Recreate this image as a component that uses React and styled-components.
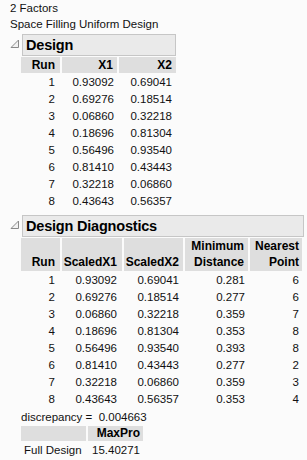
import React from 'react';
import styled, { createGlobalStyle } from 'styled-components';

const GlobalStyle = createGlobalStyle`
  body {
    margin: 0;
    background: #fbfbfb;
    font-family: "Liberation Sans", Arial, sans-serif;
    font-size: 11.5px;
    color: #111;
  }
`;

const designRows = [
  [1, '0.93092', '0.69041'],
  [2, '0.69276', '0.18514'],
  [3, '0.06860', '0.32218'],
  [4, '0.18696', '0.81304'],
  [5, '0.56496', '0.93540'],
  [6, '0.81410', '0.43443'],
  [7, '0.32218', '0.06860'],
  [8, '0.43643', '0.56357'],
];

const diagRows = [
  [1, '0.93092', '0.69041', '0.281', 6],
  [2, '0.69276', '0.18514', '0.277', 6],
  [3, '0.06860', '0.32218', '0.359', 7],
  [4, '0.18696', '0.81304', '0.353', 8],
  [5, '0.56496', '0.93540', '0.393', 8],
  [6, '0.81410', '0.43443', '0.277', 2],
  [7, '0.32218', '0.06860', '0.359', 3],
  [8, '0.43643', '0.56357', '0.353', 4],
];

const Disclosure = () => (
  <TriangleBox>
    <svg width="10" height="10" viewBox="0 0 10 10">
      <polygon points="8.5,1 8.5,8.5 1,8.5" fill="#f2f2f2" stroke="#8a8a8a" strokeWidth="1" />
    </svg>
  </TriangleBox>
);

const App = () => {
  return (
    <Page>
      <GlobalStyle />
      <Line>2 Factors</Line>
      <Line>Space Filling Uniform Design</Line>

      <Outline>
        <Disclosure />
        <OutlineTitle>Design</OutlineTitle>
        <Body>
          <Grid cols="39px 55px 57px">
            <HeadCell pad={5}>Run</HeadCell>
            <HeadCell>X1</HeadCell>
            <HeadCell>X2</HeadCell>
            {designRows.map((r) => (
              <React.Fragment key={r[0]}>
                <Cell pad={5}>{r[0]}</Cell>
                <Cell pad={3}>{r[1]}</Cell>
                <Cell>{r[2]}</Cell>
              </React.Fragment>
            ))}
          </Grid>
        </Body>
      </Outline>

      <Outline>
        <Disclosure />
        <OutlineTitle wide>Design Diagnostics</OutlineTitle>
        <Body>
          <Grid cols="39px 60px 59px 63px 52px">
            <HeadCell pad={5} tall>Run</HeadCell>
            <HeadCell pad={5} tall>ScaledX1</HeadCell>
            <HeadCell tall>ScaledX2</HeadCell>
            <HeadCell tall>Minimum<br />Distance</HeadCell>
            <HeadCell pad={3} tall>Nearest<br />Point</HeadCell>
            {diagRows.map((r) => (
              <React.Fragment key={r[0]}>
                <Cell pad={5}>{r[0]}</Cell>
                <Cell pad={5}>{r[1]}</Cell>
                <Cell>{r[2]}</Cell>
                <Cell pad={3}>{r[3]}</Cell>
                <Cell pad={3}>{r[4]}</Cell>
              </React.Fragment>
            ))}
          </Grid>
          <Discrepancy>discrepancy =&nbsp;&nbsp;0.004663</Discrepancy>
          <SummaryGrid cols="65px 55px">
            <HeadCell short />
            <HeadCell short pad={3}>MaxPro</HeadCell>
            <Cell left>Full Design</Cell>
            <Cell pad={3}>15.40271</Cell>
          </SummaryGrid>
        </Body>
      </Outline>
    </Page>
  );
};

const Page = styled.div`
  padding: 0 0 0 10px;
`;

const Line = styled.div`
  line-height: 16px;
  height: 16px;
`;

const Outline = styled.div`
  display: inline-grid;
  grid-template-columns: 11px max-content;
  margin-top: 2px;
  align-items: start;
`;

const TriangleBox = styled.div`
  padding: 5px 0 0 0;
  height: 10px;
`;

const OutlineTitle = styled.div`
  margin-left: 1px;
  margin-right: ${(p) => (p.wide ? -2 : 0)}px;
  height: 20px;
  line-height: 20px;
  background: #eaeaea;
  border: 1px solid #c6c6c6;
  padding-left: 3px;
  font-weight: bold;
  font-size: 14.5px;
  letter-spacing: -0.2px;
  color: #000;
`;

const Body = styled.div`
  grid-column: 2;
  padding-top: 1px;
  padding-bottom: 4px;
`;

const Grid = styled.div`
  display: grid;
  grid-template-columns: ${(p) => p.cols};
  column-gap: 2px;
`;

const SummaryGrid = styled(Grid)`
  margin-top: 1px;
`;

const HeadCell = styled.div`
  background: #dedede;
  font-weight: bold;
  font-size: 12px;
  text-align: right;
  padding-right: ${(p) => (p.pad ?? 4)}px;
  line-height: 16px;
  height: ${(p) => (p.tall ? 32 : p.short ? 15 : 16)}px;
  display: flex;
  flex-direction: column;
  justify-content: flex-end;
  white-space: nowrap;
  color: #000;
  padding-bottom: ${(p) => (p.tall ? 1 : 0)}px;
`;

const Cell = styled.div`
  text-align: ${(p) => (p.left ? 'left' : 'right')};
  padding-right: ${(p) => (p.left ? 0 : p.pad ?? 4)}px;
  padding-left: ${(p) => (p.left ? 3 : 0)}px;
  line-height: 19px;
  height: 17px;
  white-space: nowrap;
`;

const Discrepancy = styled.div`
  line-height: 16px;
  margin-top: 2px;
`;

export default App;
